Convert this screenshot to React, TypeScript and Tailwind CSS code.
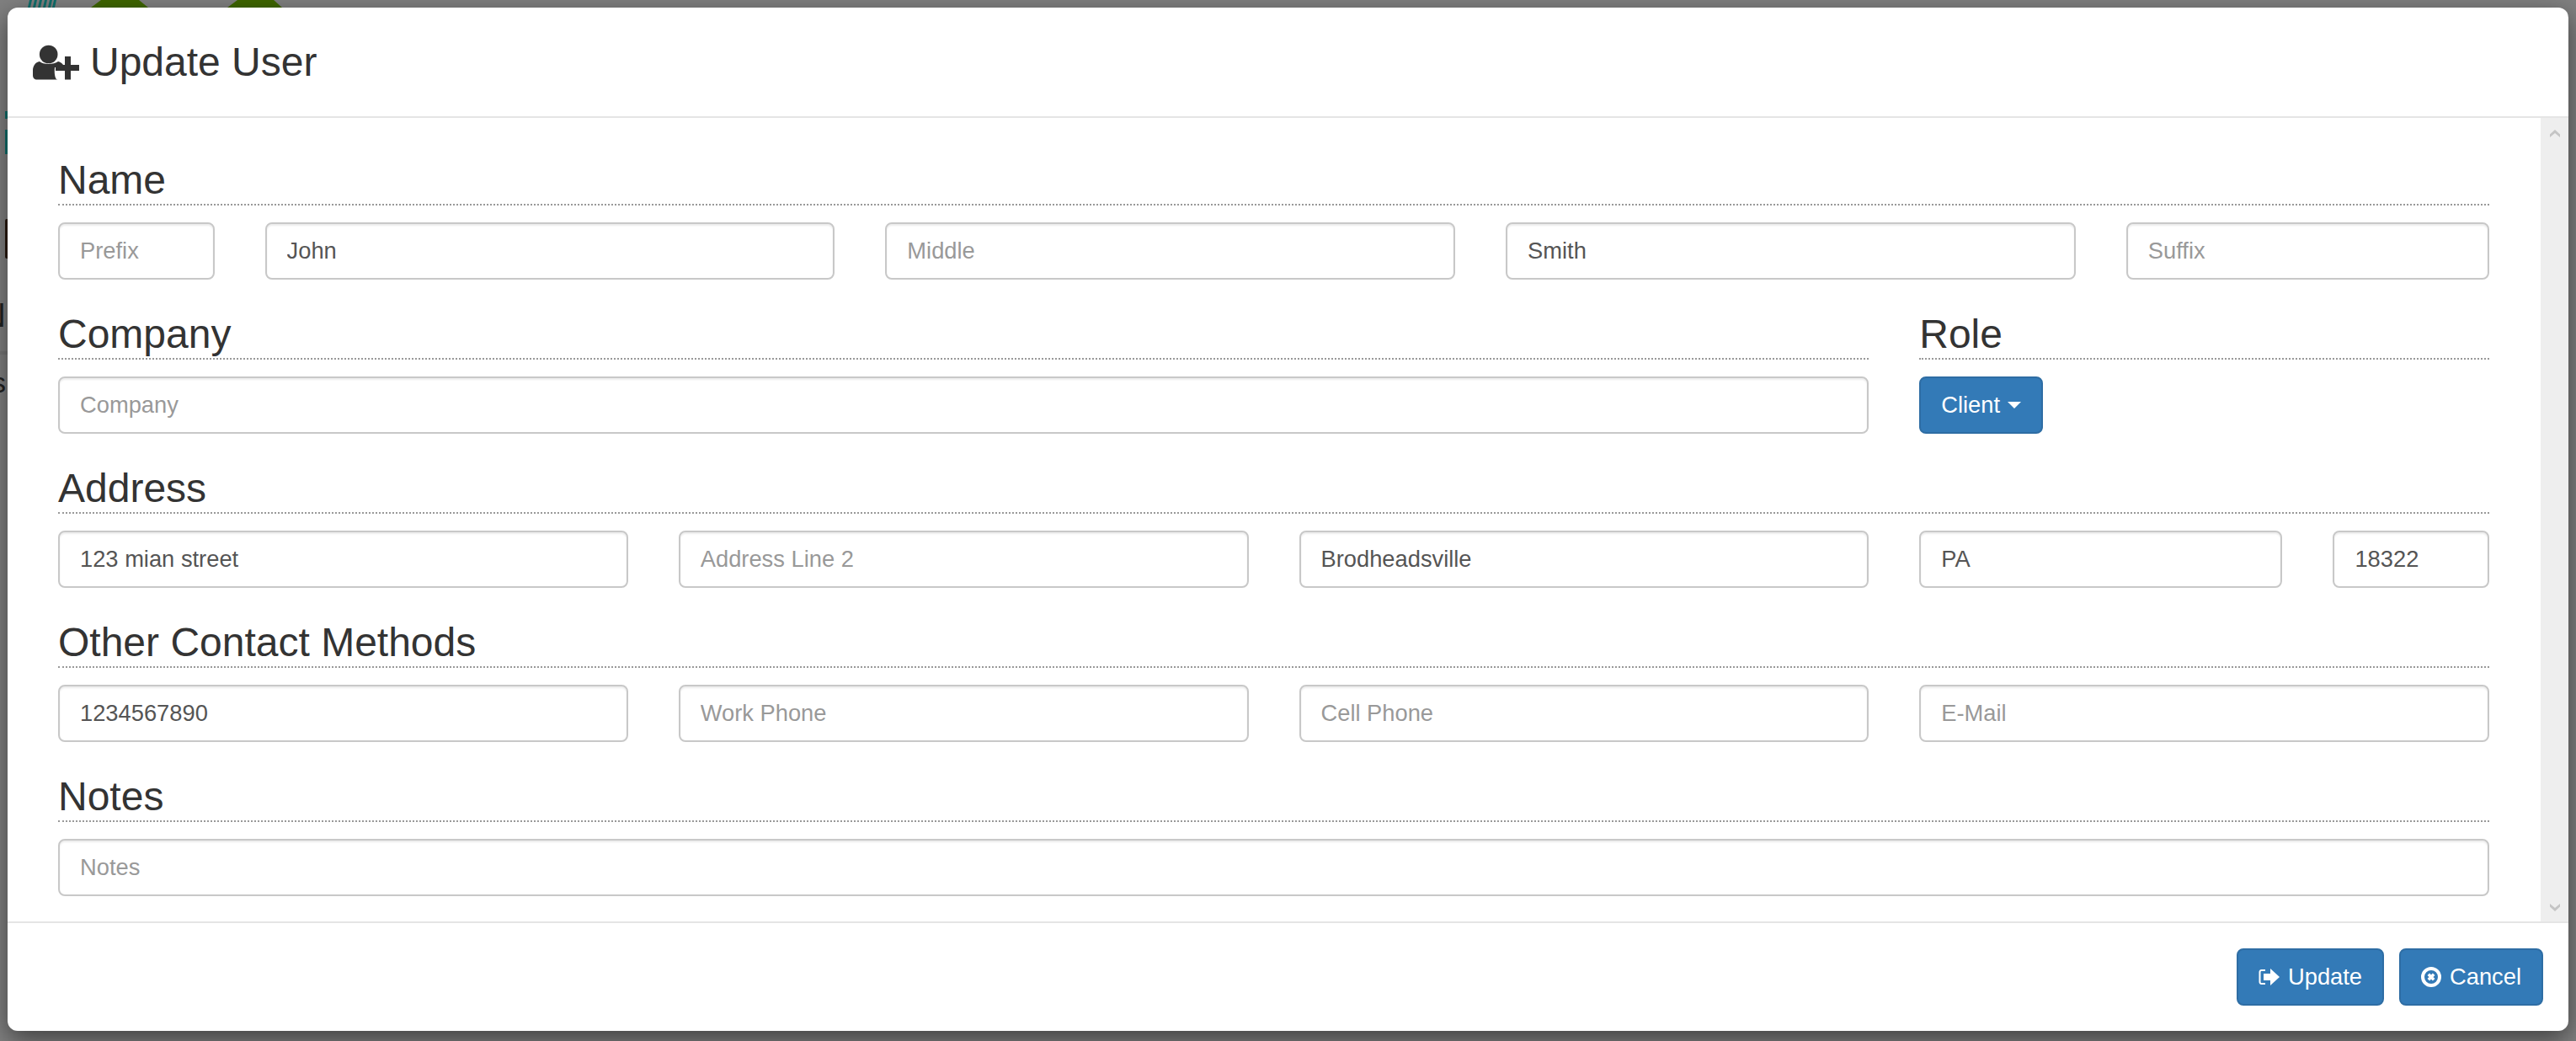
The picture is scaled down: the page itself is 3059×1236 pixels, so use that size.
import { ReactNode } from "react";

const Field = ({ span, placeholder, value }: { span: string; placeholder: string; value?: string }) => (
  <input
    readOnly
    placeholder={placeholder}
    value={value ?? ""}
    className={`${span} h-[68px] w-full rounded-[8px] border-2 border-[#c8c8c8] bg-white px-[24px] text-[27.3px] text-[#555] placeholder:text-[#999] shadow-[inset_0_2px_2px_rgba(0,0,0,0.075)] outline-none`}
  />
);

const Heading = ({ span, children }: { span: string; children: ReactNode }) => (
  <h3 className={`${span} mt-[39px] mb-[20px] border-b-2 border-dotted border-[#999] pb-[2px] text-[48px] leading-[52px] text-[#333]`}>
    {children}
  </h3>
);

const BlueButton = ({ children, gap }: { children: ReactNode; gap: string }) => (
  <button className={`${gap} flex h-[68px] items-center rounded-[8px] border-2 border-[#2e6da4] bg-[#337ab7] px-[24px] text-[27.3px] text-white`}>
    {children}
  </button>
);

const UserPlusIcon = () => (
  <svg viewBox="0 0 55 42" className="h-[42px] w-[55px] text-[#333]">
    <circle cx="18.7" cy="11.5" r="10.8" fill="currentColor" />
    <path
      d="M8 20 C12 24 25 24 30 20 C35 21 38 26 39 30 L39 36 C39 40 36 41.5 33 41.5 L5 41.5 C2 41.5 0 40 0 36 L0 31 C0 25 3 21 8 20 Z"
      fill="currentColor"
    />
    <path d="M26 27 H38 V14 H45 V27 H55 V33 H45 V42 H30 C27 42 25 36 26 27 Z" fill="white" />
    <path d="M38 14 H45 V24 H55 V31 H45 V41.5 H38 V31 H27 V24 H38 Z" fill="currentColor" />
  </svg>
);

export default function App() {
  return (
    <div className="relative h-[1236px] w-[3059px] overflow-hidden bg-[#808080] font-['Liberation_Sans',sans-serif]">
      {/* bits of the page behind the backdrop */}
      <svg viewBox="0 0 360 9" className="absolute left-0 top-0 h-[9px] w-[360px]">
        <path d="M120 0 H165 L176 9 H108 Z" fill="#3f6600" />
        <path d="M282 0 H325 L335 9 H270 Z" fill="#3f6600" />
        <path
          d="M35 0 h3 l-2 9 h-3 Z M41 0 h3 l-2 9 h-3 Z M47 0 h3 l-2 9 h-3 Z M53 0 h3 l-2 9 h-3 Z M59 0 h3 l-2 9 h-3 Z M64 0 h3 l-2 9 h-3 Z"
          fill="#0f6f6c"
        />
      </svg>
      <div className="absolute left-[6px] top-[132px] h-[9px] w-[3px] bg-[#0f6f6c]" />
      <div className="absolute left-[6px] top-[154px] h-[29px] w-[3px] bg-[#0f6f6c]" />
      <div className="absolute left-[6px] top-[260px] h-[47px] w-[3px] rounded-l-[2px] bg-[#2a1a10]" />
      <div className="absolute left-0 top-[417px] h-[4px] w-[9px] bg-[#777]" />
      <span className="absolute left-[-22px] top-[350px] text-[40px] leading-[48px] text-[#222]">N</span>
      <span className="absolute left-[-10px] top-[434px] text-[34px] leading-[40px] text-[#222]">s</span>

      <div className="absolute left-[9px] top-[9px] flex h-[1215px] w-[3041px] flex-col rounded-[12px] bg-white shadow-[0_10px_30px_rgba(0,0,0,0.5)]">
        <div className="flex h-[131px] shrink-0 items-center gap-[13px] border-b-2 border-[#e5e5e5] pl-[30px]">
          <UserPlusIcon />
          <h4 className="text-[48px] text-[#333]">Update User</h4>
        </div>

        <div className="flex min-h-0 flex-1">
          <div className="min-w-0 flex-1 pl-[60px] pr-[61px] pt-[9px]">
            <div className="grid grid-cols-12 gap-x-[60px]">
              <Heading span="col-span-12">Name</Heading>
              <Field span="col-span-1" placeholder="Prefix" />
              <Field span="col-span-3" placeholder="First" value="John" />
              <Field span="col-span-3" placeholder="Middle" />
              <Field span="col-span-3" placeholder="Last" value="Smith" />
              <Field span="col-span-2" placeholder="Suffix" />

              <Heading span="col-span-9">Company</Heading>
              <Heading span="col-span-3">Role</Heading>
              <Field span="col-span-9" placeholder="Company" />
              <div className="col-span-3">
                <BlueButton gap="gap-[9px]">
                  Client
                  <span className="h-0 w-0 border-x-[8px] border-t-[8px] border-x-transparent border-t-white" />
                </BlueButton>
              </div>

              <Heading span="col-span-12">Address</Heading>
              <Field span="col-span-3" placeholder="Address Line 1" value="123 mian street" />
              <Field span="col-span-3" placeholder="Address Line 2" />
              <Field span="col-span-3" placeholder="City" value="Brodheadsville" />
              <Field span="col-span-2" placeholder="State" value="PA" />
              <Field span="col-span-1" placeholder="Zip" value="18322" />

              <Heading span="col-span-12">Other Contact Methods</Heading>
              <Field span="col-span-3" placeholder="Home Phone" value="1234567890" />
              <Field span="col-span-3" placeholder="Work Phone" />
              <Field span="col-span-3" placeholder="Cell Phone" />
              <Field span="col-span-3" placeholder="E-Mail" />

              <Heading span="col-span-12">Notes</Heading>
              <Field span="col-span-12" placeholder="Notes" />
            </div>
          </div>
          <div className="flex w-[33px] shrink-0 flex-col items-center justify-between bg-[#eee] pb-[12px] pt-[14px]">
            <svg width="12" height="9" viewBox="0 0 12 9" className="text-[#c4c4c4]">
              <path d="M0 9 V5.5 L6 0 L12 5.5 V9 L6 4 Z" fill="currentColor" />
            </svg>
            <svg width="12" height="9" viewBox="0 0 12 9" className="text-[#c4c4c4]">
              <path d="M0 0 V3.5 L6 9 L12 3.5 V0 L6 5 Z" fill="currentColor" />
            </svg>
          </div>
        </div>

        <div className="flex h-[130px] shrink-0 items-start justify-end gap-[18px] border-t-2 border-[#e5e5e5] pr-[30px] pt-[30px]">
          <BlueButton gap="gap-[10px]">
            <svg viewBox="0 0 25 20" className="h-[20px] w-[25px]" fill="white">
              <path d="M8 1 H3.5 C1.5 1 0.5 2.5 0.5 4 V16 C0.5 17.5 1.5 19 3.5 19 H8 V17 H3.5 C3 17 2.5 16.5 2.5 16 V4 C2.5 3.5 3 3 3.5 3 H8 Z" />
              <path d="M6 6 H14 V0 L25 10 L14 20 V14 H6 Z" />
            </svg>
            Update
          </BlueButton>
          <BlueButton gap="gap-[10px]">
            <svg viewBox="0 0 24 24" className="h-[24px] w-[24px]" fill="none">
              <circle cx="12" cy="12" r="10" stroke="white" strokeWidth="4" />
              <path d="M8.8 8.8 L15.2 15.2 M15.2 8.8 L8.8 15.2" stroke="white" strokeWidth="3.6" />
            </svg>
            Cancel
          </BlueButton>
        </div>
      </div>
    </div>
  );
}
